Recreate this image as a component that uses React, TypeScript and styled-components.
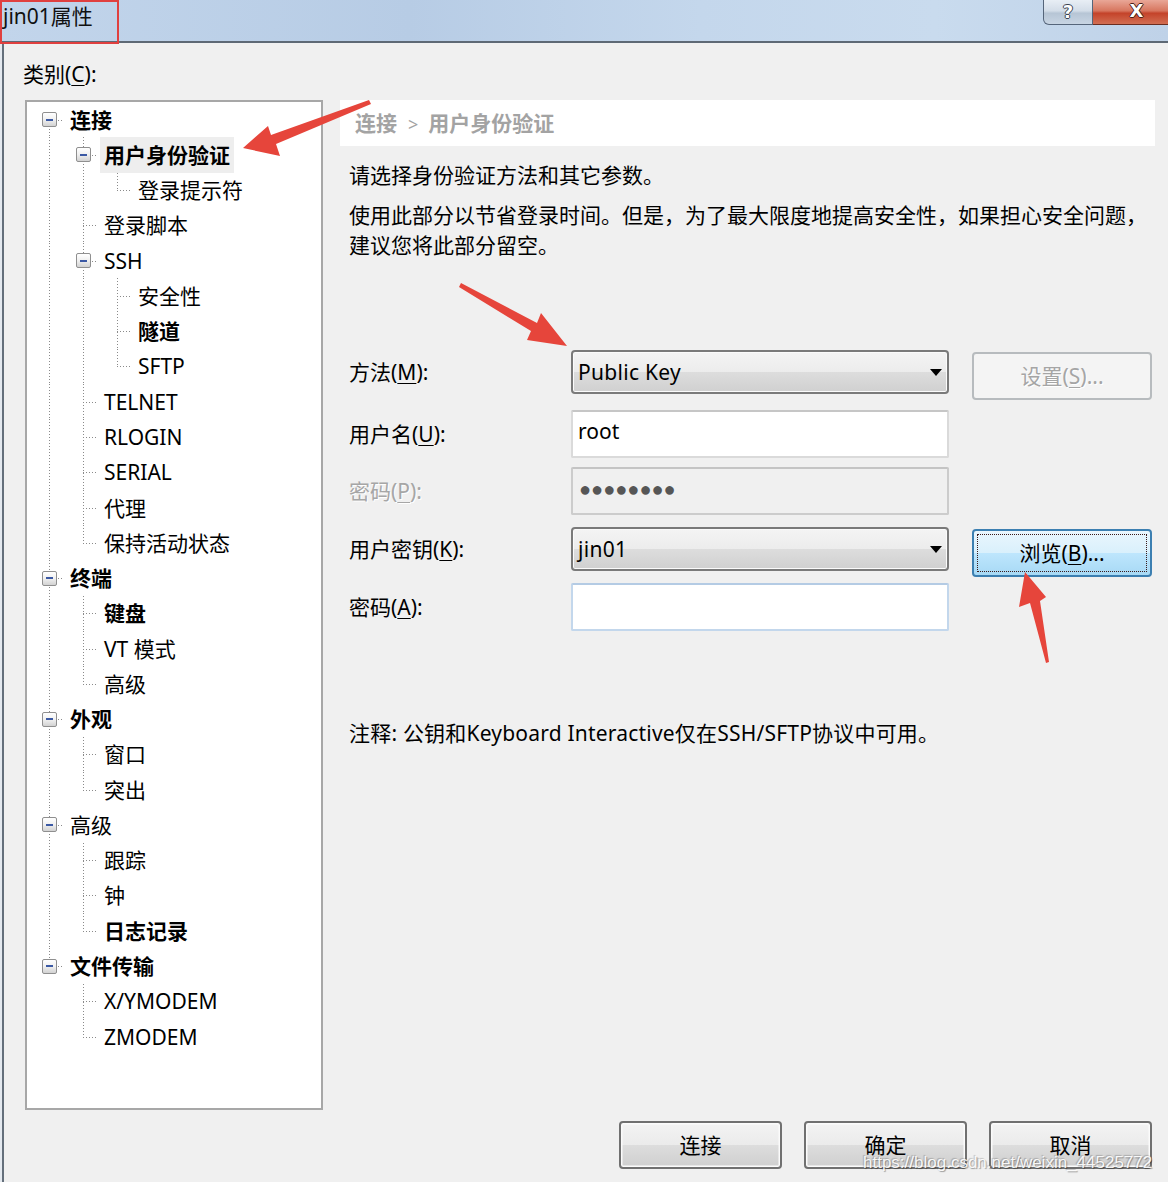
import React from "react";
import styled, { createGlobalStyle } from "styled-components";

const FONT = `"Noto Sans", "Noto Sans CJK SC", sans-serif`;

const GlobalStyle = createGlobalStyle`
  html, body { margin: 0; padding: 0; }
  body {
    width: 1168px; height: 1182px; overflow: hidden;
    background: #f0f0f0; font-family: ${FONT}; color: #000;
  }
  * { box-sizing: border-box; }
`;

type TNode = { label: string; bold?: boolean; selected?: boolean; children?: TNode[] };

const TREE: TNode[] = [
  {
    label: "连接", bold: true, children: [
      { label: "用户身份验证", bold: true, selected: true, children: [{ label: "登录提示符" }] },
      { label: "登录脚本" },
      { label: "SSH", children: [{ label: "安全性" }, { label: "隧道", bold: true }, { label: "SFTP" }] },
      { label: "TELNET" },
      { label: "RLOGIN" },
      { label: "SERIAL" },
      { label: "代理" },
      { label: "保持活动状态" },
    ],
  },
  { label: "终端", bold: true, children: [{ label: "键盘", bold: true }, { label: "VT 模式" }, { label: "高级" }] },
  { label: "外观", bold: true, children: [{ label: "窗口" }, { label: "突出" }] },
  { label: "高级", children: [{ label: "跟踪" }, { label: "钟" }, { label: "日志记录", bold: true }] },
  { label: "文件传输", bold: true, children: [{ label: "X/YMODEM" }, { label: "ZMODEM" }] },
];

type FlatRow = {
  label: string; bold: boolean; selected: boolean; level: number;
  hasChildren: boolean; isLast: boolean; isFirst: boolean; guides: boolean[];
};

function flatten(nodes: TNode[], level: number, guides: boolean[], out: FlatRow[]) {
  nodes.forEach((n, i) => {
    const isLast = i === nodes.length - 1;
    out.push({
      label: n.label, bold: !!n.bold, selected: !!n.selected, level,
      hasChildren: !!(n.children && n.children.length), isLast,
      isFirst: level === 0 && i === 0, guides,
    });
    if (n.children) flatten(n.children, level + 1, [...guides, !isLast], out);
  });
  return out;
}
const ROWS = flatten(TREE, 0, [], []);

/* ---------- window chrome ---------- */
const Page = styled.div`
  position: relative; width: 1168px; height: 1182px; overflow: hidden;
  display: flex; flex-direction: column; background: #dfe7f0;
`;
const TitleBar = styled.div`
  flex: none; height: 43px; display: flex; align-items: flex-start;
  background: linear-gradient(90deg, #c2d5eb 0%, #b7cce5 35%, #c4d7ec 60%, #c9dbee 80%, #bfd2e8 100%);
  border-bottom: 2px solid #5e6975;
`;
const Title = styled.div`
  padding-left: 3px; font-size: 21px; line-height: 32px; color: #111; white-space: nowrap;
`;
const Controls = styled.div`
  margin-left: auto; display: flex; height: 25px; margin-right: -13px;
`;
const HelpBtn = styled.div`
  width: 50px; height: 25px; border: 1px solid #55657a; border-top: none;
  border-radius: 0 0 0 6px; padding-top: 2px;
  background: linear-gradient(#e8eef5 0%, #d3dde8 45%, #b6c5d5 55%, #c8d5e3 100%);
  display: flex; justify-content: center; align-items: flex-start;
  font: bold 18px/19px "DejaVu Sans", sans-serif; color: #fff;
  text-shadow: 1px 0 0 #3a4350, -1px 0 0 #3a4350, 0 1px 0 #3a4350, 0 -1px 0 #3a4350;
`;
const CloseBtn = styled.div`
  width: 88px; height: 25px; border: 1px solid #6b2d20; border-top: none; border-left: none;
  padding-top: 1px;
  background: linear-gradient(#e9a797 0%, #d7765f 45%, #c4432a 55%, #d26e52 100%);
  display: flex; justify-content: center; align-items: flex-start;
  font: bold 18px/19px "DejaVu Sans", sans-serif; color: #fff;
  text-shadow: 1px 0 0 #4a2018, -1px 0 0 #4a2018, 0 1px 0 #4a2018, 0 -1px 0 #4a2018;
`;
const Frame = styled.div`
  flex: 1; display: flex; padding-left: 2px; background: #e4e9ef;
`;
const Body = styled.div`
  flex: 1; display: flex; flex-direction: column; background: #f0f0f0;
  border-left: 2px solid #646f7b; padding: 16px 13px 0 21px;
`;
const CategoryLabel = styled.div`
  margin-left: -2px; height: 30px; line-height: 30px; font-size: 21px; margin-bottom: 11px;
`;
const Key = styled.span`
  text-decoration: underline; text-underline-offset: 3px; text-decoration-thickness: 1px;
`;
const Main = styled.div`
  display: flex; gap: 17px; height: 1010px;
`;

/* ---------- tree ---------- */
const TreeBox = styled.div`
  width: 298px; height: 1010px; flex: none; background: #fff;
  border: 2px solid #a7a7a7; padding-left: 5px; overflow: hidden;
`;
const TreeRow = styled.div`
  display: flex; height: 35.27px; align-items: stretch;
`;
const dotsV = `linear-gradient(to bottom, #8a8a8a 50%, transparent 50%)`;
const dotsH = `linear-gradient(to right, #8a8a8a 50%, transparent 50%)`;
const Guide = styled.div<{ $line: boolean }>`
  width: 34px; flex: none; position: relative;
  &::before {
    content: ""; display: ${(p) => (p.$line ? "block" : "none")};
    position: absolute; left: 17px; top: 0; bottom: 0; width: 1px;
    background-image: ${dotsV}; background-size: 1px 3px;
  }
`;
const Connector = styled.div<{ $first: boolean; $last: boolean }>`
  width: 34px; flex: none; position: relative;
  display: flex; align-items: center; justify-content: center;
  &::before {
    content: ""; position: absolute; left: 17px; width: 1px;
    top: ${(p) => (p.$first ? "50%" : "0")}; bottom: ${(p) => (p.$last ? "50%" : "0")};
    background-image: ${dotsV}; background-size: 1px 3px;
  }
  &::after {
    content: ""; position: absolute; left: 17px; right: 2px; top: 50%; height: 1px;
    background-image: ${dotsH}; background-size: 3px 1px;
  }
`;
const Expander = styled.div`
  position: relative; z-index: 1; width: 15px; height: 15px;
  border: 1px solid #8f8f8f; border-radius: 2px;
  background: linear-gradient(#ffffff 0%, #f0f0f0 50%, #d2d2d2 100%);
  display: flex; align-items: center; justify-content: center;
  &::before { content: ""; width: 7px; height: 2px; background: #3b59a4; }
`;
const NodeLabel = styled.span<{ $bold: boolean; $selected: boolean }>`
  display: flex; align-items: center; padding: 0 4px; white-space: nowrap;
  font-size: 21px; line-height: 30px; font-weight: ${(p) => (p.$bold ? 700 : 400)};
  background: ${(p) => (p.$selected ? "#eeeeee" : "transparent")};
`;

/* ---------- right pane ---------- */
const RightPane = styled.div`
  flex: 1; display: flex; flex-direction: column;
`;
const Header = styled.div`
  height: 46px; background: #fff; padding-left: 15px;
  font-size: 21px; line-height: 46px; font-weight: 700; color: #a3a3a3; white-space: nowrap;
`;
const Sep = styled.span`
  font-weight: 400; font-size: 18px; padding: 0 10px 0 11px;
`;
const Para = styled.p<{ $mt: number }>`
  margin: ${(p) => p.$mt}px 0 0 9px; font-size: 21px; line-height: 30px; white-space: nowrap;
`;
const Form = styled.div`
  margin-top: 90px; padding-left: 9px; display: flex; flex-direction: column;
`;
const FormRow = styled.div<{ $h: number; $mt: number }>`
  display: grid; grid-template-columns: 222px 378px 23px 180px;
  grid-template-rows: ${(p) => p.$h}px; margin-top: ${(p) => p.$mt}px;
  align-items: center;
`;
const FieldLabel = styled.div<{ $disabled?: boolean }>`
  font-size: 21px; line-height: 30px; white-space: nowrap;
  color: ${(p) => (p.$disabled ? "#a6a6a6" : "#000")};
  text-shadow: ${(p) => (p.$disabled ? "1px 1px 0 #fff" : "none")};
`;
const Combo = styled.div`
  grid-column: 2; align-self: stretch;
  border: 2px solid #7a7a7a; border-radius: 4px;
  background: linear-gradient(#f4f4f4 0%, #ececec 50%, #dddddd 50%, #d0d0d0 100%);
  box-shadow: inset 0 0 0 1px #fbfbfb;
  display: flex; align-items: center; justify-content: space-between;
  padding: 0 5px 0 5px; font-size: 21px; line-height: 30px; letter-spacing: 0.3px;
`;
const ComboArrow = styled.span`
  width: 0; height: 0; border-left: 6.5px solid transparent; border-right: 6.5px solid transparent;
  border-top: 7px solid #000;
`;
const TextBox = styled.div<{ $disabled?: boolean; $hot?: boolean }>`
  grid-column: 2; align-self: stretch;
  border: 2px solid ${(p) => (p.$hot ? "#c3d7ec" : p.$disabled ? "#cccccc" : "#dadada")};
  border-top-color: ${(p) => (p.$hot ? "#b4cbe4" : p.$disabled ? "#c4c4c4" : "#c6c6c6")};
  border-radius: 2px; background: ${(p) => (p.$disabled ? "#f0f0f0" : "#fff")};
  padding: 4px 5px 0; font-size: 21px; line-height: 30px;
`;
const Dots = styled.span`
  font-family: "Liberation Sans", "DejaVu Sans", sans-serif; font-size: 20px; color: #565656;
  padding-left: 1px;
`;
const PushButton = styled.div<{ $w: number; $variant?: "normal" | "disabled" | "focused" }>`
  width: ${(p) => p.$w}px; height: 48px; flex: none; border-radius: 4px;
  display: flex; align-items: center; justify-content: center;
  font-size: 21px; line-height: 30px; white-space: nowrap;
  ${(p) =>
    p.$variant === "disabled"
      ? `border: 2px solid #b7bbbe; background: #f4f4f4; color: #a5a5a5; text-shadow: 1px 1px 0 #fff;`
      : p.$variant === "focused"
      ? `border: 2px solid #3c7fb1;
         background: linear-gradient(#eaf6fd 0%, #d9f0fc 50%, #bee6fd 50%, #a7d9f5 100%);
         outline: 1.5px dotted #3a1a1a; outline-offset: -6px; color: #000;`
      : `border: 2px solid #707070;
         background: linear-gradient(#f3f3f3 0%, #ebebeb 50%, #dddddd 50%, #cfcfcf 100%);
         box-shadow: inset 0 0 0 1.5px #fbfbfb; color: #000;`}
`;
const SideButton = styled(PushButton)`
  grid-column: 4; align-self: start; margin-top: 2px;
`;
const Note = styled.p`
  margin: 87px 0 0 9px; font-size: 21px; line-height: 30px; white-space: nowrap;
  letter-spacing: 0.2px;
`;
const Footer = styled.div`
  display: flex; justify-content: flex-end; gap: 22px; margin-top: 11px; padding-right: 3px;
`;

/* ---------- overlays ---------- */
const Overlay = styled.svg`
  position: absolute; left: 0; top: 0; width: 1168px; height: 1182px; pointer-events: none;
`;
const Watermark = styled.div`
  position: absolute; left: 863px; top: 1151px; pointer-events: none;
  font-family: "Liberation Sans", Arial, sans-serif; font-size: 17px; line-height: 24px;
  color: rgba(255, 255, 255, 0.92);
  text-shadow: 1px 1px 1px rgba(0, 0, 0, 0.35), -1px -1px 1px rgba(0, 0, 0, 0.2);
  white-space: nowrap;
`;

export default function App() {
  return (
    <Page>
      <GlobalStyle />
      <TitleBar>
        <Title>jin01属性</Title>
        <Controls>
          <HelpBtn>?</HelpBtn>
          <CloseBtn>X</CloseBtn>
        </Controls>
      </TitleBar>
      <Frame>
        <Body>
          <CategoryLabel>
            类别(<Key>C</Key>):
          </CategoryLabel>
          <Main>
            <TreeBox>
              {ROWS.map((r, i) => (
                <TreeRow key={i}>
                  {r.guides.map((g, j) => (
                    <Guide key={j} $line={g} />
                  ))}
                  <Connector $first={r.isFirst} $last={r.isLast}>
                    {r.hasChildren && <Expander />}
                  </Connector>
                  <NodeLabel $bold={r.bold} $selected={r.selected}>
                    {r.label}
                  </NodeLabel>
                </TreeRow>
              ))}
            </TreeBox>
            <RightPane>
              <Header>
                连接<Sep>&gt;</Sep>用户身份验证
              </Header>
              <Para $mt={14}>请选择身份验证方法和其它参数。</Para>
              <Para $mt={10}>
                使用此部分以节省登录时间。但是，为了最大限度地提高安全性，如果担心安全问题，
                <br />
                建议您将此部分留空。
              </Para>
              <Form>
                <FormRow $h={44} $mt={0}>
                  <FieldLabel>
                    方法(<Key>M</Key>):
                  </FieldLabel>
                  <Combo>
                    <span>Public Key</span>
                    <ComboArrow />
                  </Combo>
                  <SideButton $w={180} $variant="disabled">
                    设置(<Key>S</Key>)...
                  </SideButton>
                </FormRow>
                <FormRow $h={48} $mt={16}>
                  <FieldLabel>
                    用户名(<Key>U</Key>):
                  </FieldLabel>
                  <TextBox>root</TextBox>
                </FormRow>
                <FormRow $h={48} $mt={9}>
                  <FieldLabel $disabled>
                    密码(<Key>P</Key>):
                  </FieldLabel>
                  <TextBox $disabled>
                    <Dots>●●●●●●●●</Dots>
                  </TextBox>
                </FormRow>
                <FormRow $h={44} $mt={12}>
                  <FieldLabel>
                    用户密钥(<Key>K</Key>):
                  </FieldLabel>
                  <Combo>
                    <span>jin01</span>
                    <ComboArrow />
                  </Combo>
                  <SideButton $w={180} $variant="focused">
                    浏览(<Key>B</Key>)...
                  </SideButton>
                </FormRow>
                <FormRow $h={48} $mt={12}>
                  <FieldLabel>
                    密码(<Key>A</Key>):
                  </FieldLabel>
                  <TextBox $hot />
                </FormRow>
              </Form>
              <Note>注释: 公钥和Keyboard Interactive仅在SSH/SFTP协议中可用。</Note>
            </RightPane>
          </Main>
          <Footer>
            <PushButton $w={163}>连接</PushButton>
            <PushButton $w={163}>确定</PushButton>
            <PushButton $w={163}>取消</PushButton>
          </Footer>
        </Body>
      </Frame>
      <Overlay viewBox="0 0 1168 1182">
        <rect x="1" y="1" width="117" height="42" fill="none" stroke="#e0403f" strokeWidth="2" />
        <polygon
          fill="#e6453b"
          points="243,148 268,126 271,135 369,100 371,104 276,144 280,156"
        />
        <polygon
          fill="#e6453b"
          points="461,283 537,323 541,313 567,346 527,340 531,331 459,287"
        />
        <polygon
          fill="#e6453b"
          points="1025,572 1046,597 1040,601 1049,662 1046,663 1030,603 1019,607"
        />
      </Overlay>
      <Watermark>https://blog.csdn.net/weixin_44525772</Watermark>
    </Page>
  );
}
